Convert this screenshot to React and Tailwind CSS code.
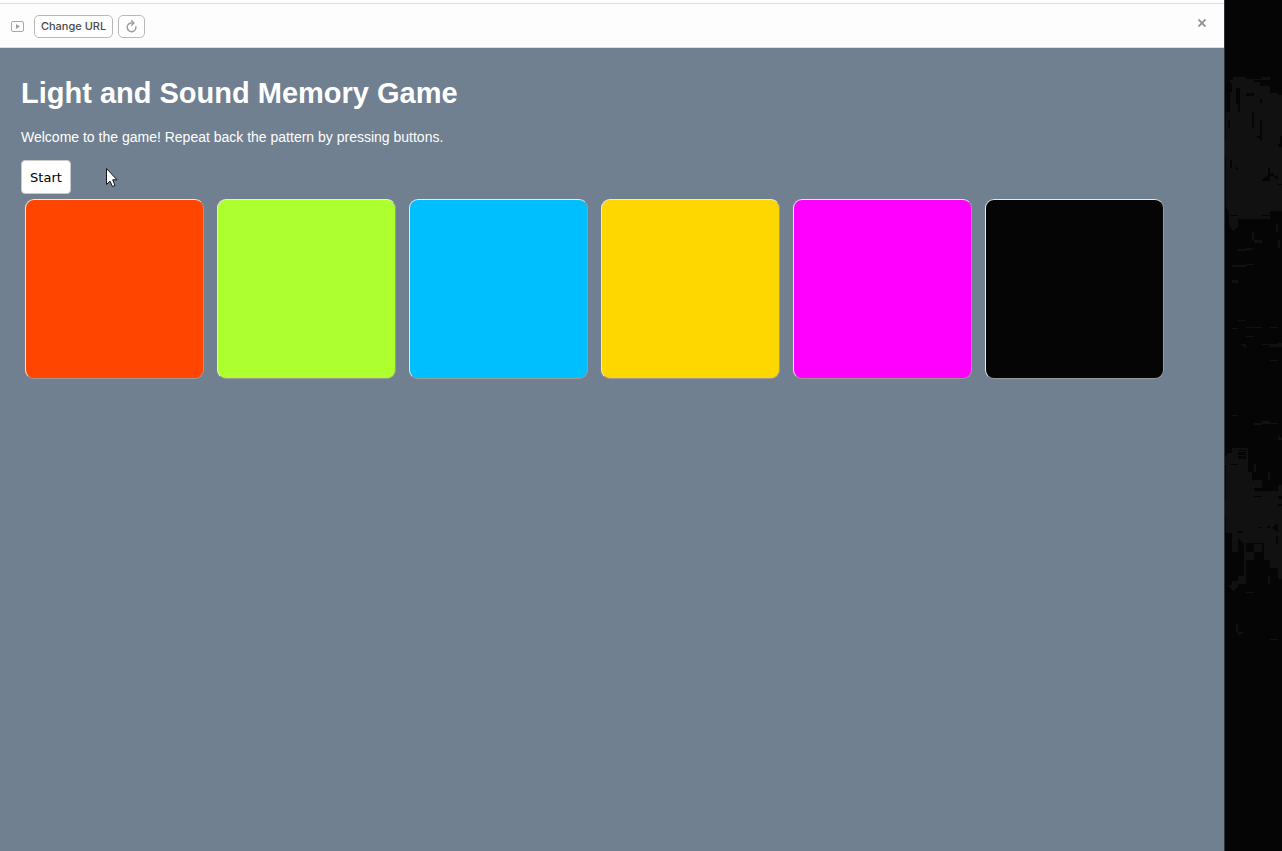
import React from "react";

const pads = [
  { name: "Orange red", color: "bg-[#ff4500]" },
  { name: "Green yellow", color: "bg-[#adff2f]" },
  { name: "Sky blue", color: "bg-[#00bfff]" },
  { name: "Gold", color: "bg-[#ffd700]" },
  { name: "Magenta", color: "bg-[#ff00ff]" },
  { name: "Black", color: "bg-[#050505]" },
];

function Toolbar() {
  return (
    <header className="flex h-12 shrink-0 flex-col border-b border-[#d9dfdf] bg-[#fdfdfd]">
      <div className="h-1 shrink-0 border-b border-[#dedede]" />
      <div className="flex flex-1 items-center gap-[5px] pt-px pr-[17px] pl-[11px]">
        <svg className="mr-[5px]" width="13" height="11" viewBox="0 0 13 11" aria-hidden="true">
          <rect x="0.5" y="0.5" width="12" height="10" rx="1.5" fill="#fdfdfd" stroke="#a8a8a8" />
          <path d="M5 3v5l4-2.5z" fill="#a0a0a0" />
        </svg>
        <button
          type="button"
          className="h-[23px] w-[79px] rounded-[5px] border border-[#b8b8b8] bg-white text-center font-['Inter',sans-serif] text-[11px] leading-[21px] font-medium whitespace-nowrap text-[#4a4a4a]"
        >
          Change URL
        </button>
        <button
          type="button"
          aria-label="Reload"
          className="flex h-[23px] w-[27px] items-center justify-center rounded-[5px] border border-[#b8b8b8] bg-white"
        >
          <svg width="13" height="14" viewBox="0 0 13 14" fill="none" stroke="#9a9a9a" strokeWidth="1.5" aria-hidden="true">
            <path d="M5 4.3A4.3 4.3 0 1 0 10.7 7.2" />
            <path d="M5 4H9" />
            <path d="M6.2 1.2L9 4L6.2 6.8" strokeWidth="1.3" />
          </svg>
        </button>
        <button type="button" aria-label="Close" className="mb-[6px] ml-auto flex h-4 w-[10px] items-center justify-center">
          <svg width="8" height="8" viewBox="0 0 8 8" stroke="#929292" strokeWidth="1.9" aria-hidden="true">
            <path d="M0.5 0.5L7.5 7.5M7.5 0.5L0.5 7.5" />
          </svg>
        </button>
      </div>
    </header>
  );
}

function Pointer() {
  return (
    <svg className="absolute top-[7px] left-[84px]" width="13" height="21" viewBox="0 0 13 21" aria-hidden="true">
      <path
        d="M1.5 1.5V17.5L5 14.2L7.5 19.5L10 18.5L7.7 12.8H12Z"
        fill="#fff"
        stroke="#11131f"
        strokeWidth="1"
      />
    </svg>
  );
}

function Backdrop() {
  return (
    <aside className="w-[58px] shrink-0 border-l border-[#30343a] bg-[#050505]" aria-hidden="true">
      <svg width="57" height="700" viewBox="1 0 57 700">
        <g fill="#111">
          <path d="M9 77H22V79H30V82H36V86H46V93H54V95H58V211H46V219H14V227L9 231L5 225V213L2 207V156H1V140H2V112H6V92H8V83H6V80H9Z" />
          <path d="M30 79H38V77H46V80H30ZM28 232H30V240H38V243H30V240H28ZM52 224H54V232H52ZM54 240H56V248H54ZM14 249H22V248H30V249L22 251H14ZM8 265H22V264H30V265H22V267H8ZM8 280H14V283H8Z" />
          <path d="M14 320H22V321H14ZM8 328H14V329H8ZM22 327H38V328H22ZM46 327H54V328H46ZM22 336H30V337H22ZM16 344H22V348ZM38 344H54V343H58V347H46V345H38ZM54 360H46V361H54Z" />
          <path d="M8 415H14V416H8ZM30 423H38V421H46V423H54V424H38V425H30ZM54 435L58 438V440H54Z" />
          <path d="M8 448H24V472H28V480L34 485H30V491H54V485H58V570H54V568H46V560H40V543H22V552H30V560H22V584H14V587L9 591L4 585H8V581H14V576H20V544L14 538V552H8V533H2V516H1V500H2V465H1V457L4 453H8Z" />
          <path d="M30 464H32V472H30ZM30 480H38V488H30ZM44 472H46V480H44ZM30 544H38V552H30ZM44 576H46V584H44ZM54 568H58V579H54ZM22 592H30V593H22ZM12 624H14V632H20L14 636V632H12ZM46 639H54V640H46Z" />
        </g>
        <g fill="#050505">
          <path d="M12 88H16V104H12ZM14 104H16V112H14ZM22 93H30V96H22ZM28 112H30V128H28ZM36 120H38V141L32 136H36ZM36 99H38V103H36ZM4 120H6V128H4ZM6 160H8V168H6ZM56 136H58V147H54V144H56Z" />
          <path d="M44 168H46V173H50V176H54V180L49 176H46V181H38V179L44 176ZM10 167L14 170V168ZM54 184H58V185H54ZM6 215H14V216H6ZM38 215H46V216H38Z" />
          <path d="M14 450H22V451H14ZM14 452H22V455H14ZM14 456H22V459H14ZM6 464H14V465H6ZM30 496H38V497H30ZM54 496H58V499H54ZM54 504H58V506H54ZM35 527H38V528H35ZM43 526H46V528H43ZM48 528L52 524H54V532ZM52 536H54V544H52ZM14 531H19V533H14Z" />
        </g>
      </svg>
    </aside>
  );
}

export default function App() {
  return (
    <div className="flex min-h-screen bg-[#050505] font-['Liberation_Sans',Arial,sans-serif]">
      <div className="flex min-w-0 flex-1 flex-col bg-[#708090]">
        <Toolbar />
        <main className="px-[21px] pt-[27px] text-white">
          <h1 className="text-[29px] leading-9 font-bold">Light and Sound Memory Game</h1>
          <p className="mt-4 text-[14px] leading-5">Welcome to the game! Repeat back the pattern by pressing buttons.</p>
          <div className="relative mt-[13px] flex">
            <button
              type="button"
              className="h-[34px] w-[50px] rounded-[4px] border border-[#c8c8c8] bg-white pt-[2px] text-center font-['DejaVu_Sans',sans-serif] text-[13px] leading-[30px] text-black"
            >
              Start
            </button>
            <Pointer />
          </div>
          <div className="mt-[5px] flex flex-wrap gap-[13px] pl-1">
            {pads.map((pad) => (
              <button
                key={pad.name}
                type="button"
                aria-label={pad.name}
                className={`h-[180px] w-[179px] rounded-[9px] border border-t-[#e8e8e8] border-r-[#9a9a9a] border-b-[#9a9a9a] border-l-[#e8e8e8] ${pad.color}`}
              />
            ))}
          </div>
        </main>
      </div>
      <Backdrop />
    </div>
  );
}
